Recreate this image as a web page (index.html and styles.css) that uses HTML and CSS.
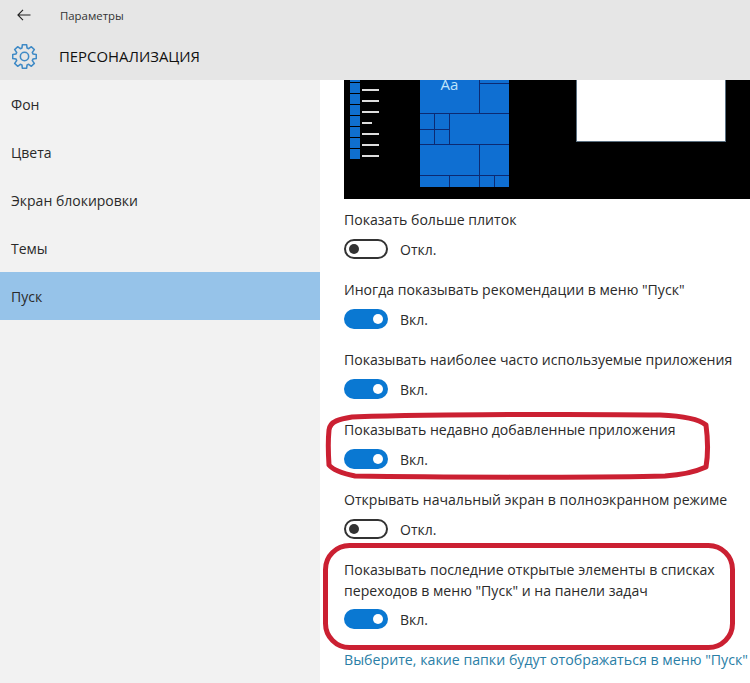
FILE: index.html
```html
<!DOCTYPE html>
<html lang="ru">
<head>
<meta charset="utf-8">
<title>Параметры</title>
<link rel="stylesheet" href="styles.css">
</head>
<body>
<div class="app">
  <header class="header">
    <div class="topbar">
      <svg class="back" width="14" height="12" viewBox="0 0 14 12"><path d="M13.5 6H1M6 .8 .9 6 6 11.2" fill="none" stroke="#222" stroke-width="1.1"/></svg>
      <span class="app-name">Параметры</span>
    </div>
    <div class="titlebar">
      <svg class="gear" width="26" height="26" viewBox="0 0 24 24"><path d="M20.13 9.51 23.33 10V14L20.13 14.49 19.51 15.99 21.42 18.6 18.6 21.42 15.99 19.51 14.49 20.13 14 23.33H10L9.51 20.13 8.01 19.51 5.4 21.42 2.58 18.6 4.49 15.99 3.87 14.49 .67 14V10L3.87 9.51 4.49 8.01 2.58 5.4 5.4 2.58 8.01 4.49 9.51 3.87 10 .67H14L14.49 3.87 15.99 4.49 18.6 2.58 21.42 5.4 19.51 8.01Z" fill="none" stroke="#3f8ac6" stroke-width="1.5" stroke-linejoin="round"/><circle cx="12" cy="12" r="4" fill="none" stroke="#3f8ac6" stroke-width="1.5"/></svg>
      <h1 class="title">ПЕРСОНАЛИЗАЦИЯ</h1>
    </div>
  </header>
  <div class="main">
    <nav class="sidebar">
      <div class="nav-item">Фон</div>
      <div class="nav-item">Цвета</div>
      <div class="nav-item">Экран блокировки</div>
      <div class="nav-item">Темы</div>
      <div class="nav-item active">Пуск</div>
    </nav>
    <section class="content">
      <div class="preview">
        <div class="start-list">
          <div class="apps"><i></i><i></i><i></i><i></i><i></i><i></i><i></i><i></i></div>
          <div class="lines"><b></b><b></b><b></b><b class="short"></b><b></b><b></b><b></b></div>
        </div>
        <div class="tiles">
          <div class="t t-aa"><span>Aa</span></div>
          <div class="t c2"></div>
          <div class="t c2"></div>
          <div class="t"></div>
          <div class="t"></div>
          <div class="t t-wide"></div>
          <div class="t"></div>
          <div class="t"></div>
          <div class="t c4"></div>
          <div class="t c2"></div>
          <div class="t c2"></div>
          <div class="t c2"></div>
          <div class="t"></div>
          <div class="t"></div>
        </div>
        <div class="window"></div>
      </div>
      <div class="setting">
        <div class="label">Показать больше плиток</div>
        <div class="state"><span class="toggle off"></span>Откл.</div>
      </div>
      <div class="setting">
        <div class="label">Иногда показывать рекомендации в меню "Пуск"</div>
        <div class="state"><span class="toggle on"></span>Вкл.</div>
      </div>
      <div class="setting">
        <div class="label">Показывать наиболее часто используемые приложения</div>
        <div class="state"><span class="toggle on"></span>Вкл.</div>
      </div>
      <div class="setting">
        <div class="label">Показывать недавно добавленные приложения</div>
        <div class="state"><span class="toggle on"></span>Вкл.</div>
      </div>
      <div class="setting">
        <div class="label">Открывать начальный экран в полноэкранном режиме</div>
        <div class="state"><span class="toggle off"></span>Откл.</div>
      </div>
      <div class="setting">
        <div class="label two-line">Показывать последние открытые элементы в списках<br>переходов в меню "Пуск" и на панели задач</div>
        <div class="state"><span class="toggle on"></span>Вкл.</div>
      </div>
      <a class="link" href="#">Выберите, какие папки будут отображаться в меню "Пуск"</a>
    </section>
  </div>
  <svg class="marks" width="750" height="683" viewBox="0 0 750 683">
    <path d="M329 430C330 421 340 419 352 417C420 414 600 414 660 415C685 416 700 420 706 425C708 440 708 455 706 467C695 472 680 475 665 476C600 478 420 477 355 476C340 473 333 470 329 465C328 450 328 440 329 430Z" fill="none" stroke="#cb2032" stroke-width="5" stroke-linejoin="round"/>
    <rect x="325.5" y="545.5" width="407" height="102" rx="24" fill="none" stroke="#cb2032" stroke-width="5"/>
  </svg>
</div>
</body>
</html>
```
FILE: styles.css
```css
* { box-sizing: border-box; }
html, body { margin: 0; padding: 0; }
body {
  width: 750px;
  height: 683px;
  overflow: hidden;
  background: #fff;
  font-family: "Open Sans", "Noto Sans", sans-serif;
  font-size: 14px;
  color: #222;
}
.app { position: relative; width: 750px; height: 683px; overflow: hidden; }
.header { height: 80px; background: #e6e6e6; }
.topbar { height: 32px; display: flex; align-items: center; padding-left: 17px; padding-bottom: 2px; }
.back { flex: none; }
.app-name { margin-left: 29px; font-size: 11.4px; color: #333; }
.titlebar { height: 48px; display: flex; align-items: center; padding-left: 12px; }
.gear { flex: none; width: 25px; height: 25px; }
.title { margin: 0 0 0 22px; font-size: 14.9px; font-weight: 400; color: #111; }
.main { display: flex; height: 603px; }
.sidebar { width: 320px; flex: none; background: #f2f2f2; }
.nav-item { height: 48px; display: flex; align-items: center; padding-left: 11px; font-size: 14px; color: #2a2a2a; }
.nav-item.active { background: #96c3e9; }
.content { flex: 1; padding-left: 24px; min-width: 0; }
.preview { height: 119px; background: #000; display: flex; align-items: flex-start; overflow: hidden; padding-left: 6px; margin-bottom: 10px; }
.start-list { display: flex; width: 70px; flex: none; }
.apps { width: 10px; display: flex; flex-direction: column; gap: 1px; margin-top: -8px; }
.apps i { display: block; height: 10px; background: #0f6fce; }
.lines { margin-left: 2px; width: 17px; padding-top: 9px; display: flex; flex-direction: column; gap: 9px; }
.lines b { display: block; height: 2px; background: #ddd; }
.lines b.short { width: 10px; }
.tiles {
  width: 89px;
  flex: none;
  display: grid;
  grid-template-columns: repeat(6, 14px);
  grid-template-rows: 3px 29px 15px 14px 30px 11px;
  gap: 1px;
  background: #0c2a72;
}
.t { background: #0f6fd2; }
.c2 { grid-column: span 2; }
.c4 { grid-column: span 4; }
.t-aa { grid-column: span 4; grid-row: span 2; color: #bfe3fb; font-size: 15px; line-height: 10px; text-align: center; overflow: hidden; }
.t-aa span { display: block; margin-top: -1px; }
.t-wide { grid-column: 3 / span 4; grid-row: 3 / span 2; }
.window { width: 150px; height: 62px; flex: none; margin-left: 67px; background: #fff; border: 1px solid #5a6f80; border-top: 0; }
.setting { margin-bottom: 20px; }
.label { line-height: 22px; font-size: 14.08px; color: #2a2a2a; }
.label.two-line { line-height: 21px; }
.state { display: flex; align-items: center; margin-top: 8px; height: 20px; font-size: 14px; color: #2a2a2a; }
.toggle { width: 44px; height: 20px; border-radius: 10px; margin-right: 12px; display: flex; align-items: center; flex: none; }
.toggle::after { content: ""; width: 10px; height: 10px; border-radius: 50%; }
.toggle.off { border: 2px solid #333; padding-left: 3px; }
.toggle.off::after { background: #333; }
.toggle.on { background: #0a78d2; justify-content: flex-end; padding-right: 5px; }
.toggle.on::after { background: #fff; }
.link { display: block; line-height: 22px; font-size: 14.2px; color: #2a7ea6; text-decoration: none; white-space: nowrap; }
.marks { position: absolute; left: 0; top: 0; pointer-events: none; }
```
